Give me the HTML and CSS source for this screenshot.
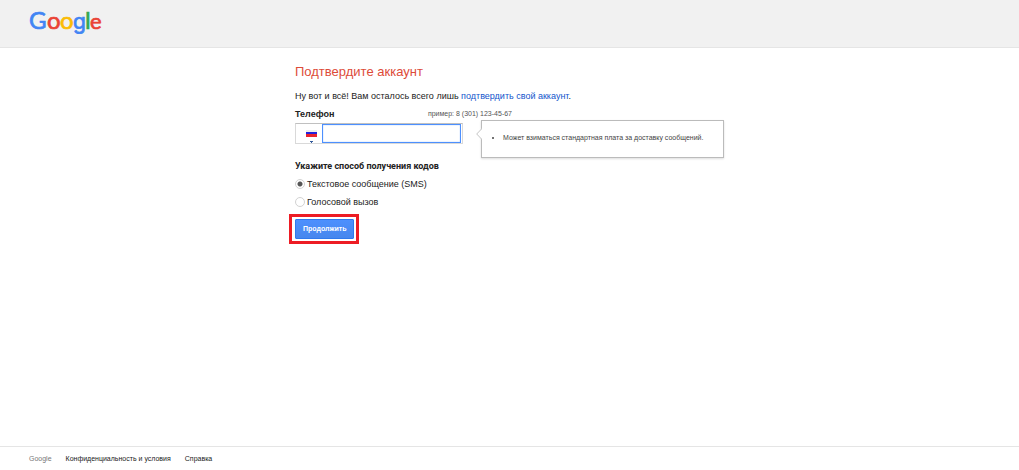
FILE: index.html
```html
<!DOCTYPE html>
<html lang="ru">
<head>
<meta charset="utf-8">
<meta name="viewport" content="width=device-width, initial-scale=1">
<title>Подтвердите аккаунт</title>
<link rel="stylesheet" href="styles.css">
</head>
<body>
<header class="header">
  <svg class="logo" width="76" height="28" viewBox="0 0 76 28" role="img" aria-label="Google">
    <text class="logo-text" y="20"><tspan class="blue" x="0">G</tspan><tspan class="red" x="18">o</tspan><tspan class="yellow" x="31">o</tspan><tspan class="logo-g blue" x="44">g</tspan><tspan class="green" x="56">l</tspan><tspan class="logo-end red" x="61">e</tspan></text>
  </svg>
</header>
<main class="main">
  <form class="form">
    <h1 class="title">Подтвердите аккаунт</h1>
    <p class="intro">Ну вот и всё! Вам осталось всего лишь <a href="#">подтвердить свой аккаунт</a>.</p>
    <div class="phone-labels">
      <label class="phone-label" for="phone">Телефон</label>
      <span class="example" id="example">пример: 8 (301) 123-45-67</span>
    </div>
    <div class="phone-row">
      <div class="phone-box">
        <button class="country" type="button" aria-label="Россия">
          <svg width="11" height="13" viewBox="0 0 11 13" aria-hidden="true">
            <path fill="#eee" d="M0 0h11v2H0z"/>
            <path fill="#2222dc" d="M0 2h11v3H0z"/>
            <path fill="#e8222d" d="M0 4h11v3H0z"/>
            <path fill="#345b9c" d="M4 11h3v1H6v1H5v-1H4z"/>
          </svg>
        </button>
        <input class="phone" id="phone" type="tel" aria-describedby="example">
      </div>
      <div class="tip">
        <svg class="tip-arrow" width="6" height="12" viewBox="0 0 6 12" aria-hidden="true">
          <path fill="#fff" stroke="#c4c4c4" d="M6 .5 .7 6 6 11.5"/>
        </svg>
        <ul class="tip-list"><li>Может взиматься стандартная плата за доставку сообщений.</li></ul>
      </div>
    </div>
    <fieldset class="methods">
      <legend class="legend">Укажите способ получения кодов</legend>
      <label class="method"><input class="radio" type="radio" name="method" checked>Текстовое сообщение (SMS)</label>
      <label class="method"><input class="radio" type="radio" name="method">Голосовой вызов</label>
    </fieldset>
    <div class="highlight"><button class="submit" type="submit">Продолжить</button></div>
  </form>
</main>
<footer class="footer">
  <span class="brand">Google</span>
  <a href="#">Конфиденциальность и условия</a>
  <a href="#">Справка</a>
</footer>
</body>
</html>
```
FILE: styles.css
```css
* { box-sizing: border-box; }
body {
  margin: 0;
  min-height: 100vh;
  display: flex;
  flex-direction: column;
  background: #fff;
  color: #222;
  font: 9px/12px "Liberation Sans", Arial, sans-serif;
}
a { color: #15c; text-decoration: none; }
.header {
  padding: 9px 29px 10px;
  background: #f1f1f1;
  border-bottom: 1px solid #e5e5e5;
}
.logo { display: block; overflow: visible; }
.logo-text { font: 24px/28px Lato, sans-serif; stroke-width: 0.7; }
.logo-g { font: 21px/28px Inter, sans-serif; }
.logo-end { font-size: 22px; }
.blue { fill: #4285f4; stroke: #4285f4; }
.red { fill: #ea4335; stroke: #ea4335; }
.yellow { fill: #fbbc05; stroke: #fbbc05; }
.green { fill: #34a853; stroke: #34a853; }
.main { flex: 1; display: flex; justify-content: center; padding: 16px 0; }
.form { width: 429px; }
.title { margin: 0; color: #dd4b39; font-size: 13px; font-weight: 400; line-height: 16px; }
.intro { margin: 10px 0 6px; }
.phone-labels { display: flex; justify-content: space-between; width: 217px; }
.phone-label { font-weight: 700; }
.legend { padding: 0; font-family: Roboto, sans-serif; font-weight: 700; }
.example { color: #555; font-size: 7px; }
.phone-row { display: flex; align-items: flex-start; gap: 18px; }
.phone-box {
  display: flex;
  width: 168px;
  height: 21px;
  margin-top: 3px;
  border: 1px solid #d9d9d9;
  border-top-color: #c0c0c0;
}
.country {
  display: flex;
  width: 26px;
  padding: 6px 0 0 10px;
  border: 0;
  background: none;
}
.country svg { flex: none; }
.phone {
  flex: 1;
  min-width: 0;
  margin: 0 1px 0 0;
  border: 1px solid #4d90fe;
  outline: 0;
  box-shadow: inset 0 0 1px #4d90fe;
  font: inherit;
}
.tip {
  position: relative;
  flex: 1;
  padding: 11px 0 13px;
  border: 1px solid #bbb;
  background: #fff;
  box-shadow: 0 1px 2px #ddd;
}
.tip-arrow { position: absolute; top: 7px; left: -6px; }
.tip-list { margin: 0; padding-left: 21px; color: #444; font-size: 7px; }
.methods { margin: 2px 0 0; padding: 0; border: 0; }
.method { display: flex; align-items: center; gap: 2px; margin-top: 6px; }
.radio {
  appearance: none;
  width: 10px;
  height: 10px;
  margin: 0;
  border: 1px solid #d2d2d2;
  border-radius: 50%;
}
.radio:checked { background: radial-gradient(circle, #555 2px, #fff 3px); }
.highlight {
  width: max-content;
  margin: 6px 0 0 -6px;
  padding: 2px 2px 2px 3px;
  border: 3px solid #ed1c24;
}
.submit {
  display: block;
  height: 20px;
  padding: 0 7px;
  border: 1px solid #3079ed;
  border-radius: 1px;
  background: linear-gradient(#4d90fe, #4787ed);
  color: #fff;
  font: 700 7px/12px "Liberation Sans", Arial, sans-serif;
}
.footer {
  display: flex;
  gap: 14px;
  padding: 6px 29px 5px;
  border-top: 1px solid #e5e5e5;
  font-size: 7px;
}
.footer a { color: #222; }
.brand { color: #777; }
```
